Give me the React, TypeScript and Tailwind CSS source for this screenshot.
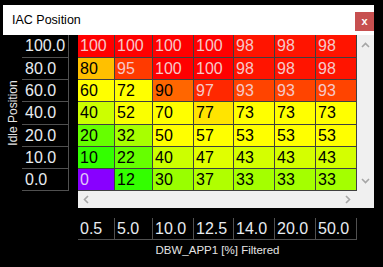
import React from 'react';

interface MapRow {
  label: string;
  values: number[];
}

const rows: MapRow[] = [
  { label: '100.0', values: [100, 100, 100, 100, 98, 98, 98] },
  { label: '80.0', values: [80, 95, 100, 100, 98, 98, 98] },
  { label: '60.0', values: [60, 72, 90, 97, 93, 93, 93] },
  { label: '40.0', values: [40, 52, 70, 77, 73, 73, 73] },
  { label: '20.0', values: [20, 32, 50, 57, 53, 53, 53] },
  { label: '10.0', values: [10, 22, 40, 47, 43, 43, 43] },
  { label: '0.0', values: [0, 12, 30, 37, 33, 33, 33] },
];

const cols = ['0.5', '5.0', '10.0', '12.5', '14.0', '20.0', '50.0'];
const colW = ['w-[37px]', 'w-[38px]', 'w-[41px]', 'w-[40px]', 'w-[41px]', 'w-[41px]', 'w-[41px]'];
const rowH = ['h-[23px]', 'h-[22px]', 'h-[22px]', 'h-[23px]', 'h-[22px]', 'h-[22px]', 'h-[22px]'];

// cell colour by value, light text on the hot / purple ones
const cellStyle: Record<number, string> = {
  100: 'bg-[#ff0000] text-[#f6c8c8]',
  98: 'bg-[#ff1400] text-[#f6c8c8]',
  97: 'bg-[#ff2800] text-[#f6c8c8]',
  95: 'bg-[#ff3a00] text-[#f6c8c8]',
  93: 'bg-[#ff4400] text-[#f6c8c8]',
  90: 'bg-[#ff6600] text-black',
  80: 'bg-[#ffc000] text-black',
  77: 'bg-[#ffe400] text-black',
  73: 'bg-[#ffff00] text-black',
  72: 'bg-[#ffff00] text-black',
  70: 'bg-[#ffff00] text-black',
  60: 'bg-[#ffff00] text-black',
  57: 'bg-[#ffff00] text-black',
  53: 'bg-[#ffff00] text-black',
  52: 'bg-[#faff00] text-black',
  50: 'bg-[#ffff00] text-black',
  47: 'bg-[#e0ff00] text-black',
  43: 'bg-[#d4ff00] text-black',
  40: 'bg-[#ccff00] text-black',
  37: 'bg-[#b0ff00] text-black',
  33: 'bg-[#a4ff00] text-black',
  32: 'bg-[#a8ff00] text-black',
  30: 'bg-[#99ff00] text-black',
  22: 'bg-[#66ff00] text-black',
  20: 'bg-[#66ff00] text-black',
  12: 'bg-[#33ff00] text-black',
  10: 'bg-[#33ff00] text-black',
  0: 'bg-[#8800ff] text-[#e0c8f8]',
};

const Chevron = ({ dir }: { dir: 'up' | 'down' | 'left' | 'right' }) => {
  const pts = {
    up: '1,6 4.5,2.5 8,6',
    down: '1,3 4.5,6.5 8,3',
    left: '6,1 2.5,4.5 6,8',
    right: '3,1 6.5,4.5 3,8',
  }[dir];
  return (
    <svg width="9" height="9" viewBox="0 0 9 9">
      <polyline points={pts} fill="none" stroke="#a6a6a6" strokeWidth="1.6" />
    </svg>
  );
};

export default function App() {
  return (
    <div className="w-[383px] h-[267px] bg-black pt-[5px] pl-[3px] overflow-hidden font-['Liberation_Sans',Arial,sans-serif]">
      <div className="w-[371px] h-[30px] bg-white flex justify-between">
        <span className="pl-[9px] text-[12.5px] leading-[30px] text-black">IAC Position</span>
        <div className="mt-[7px] w-[19px] h-[19px] bg-[#c75050] flex items-center justify-center text-white text-[11px] font-bold leading-none pb-[1px]">
          x
        </div>
      </div>

      <div className="flex">
        <div className="w-[19px] h-[156px] flex items-center justify-center">
          <span className="-rotate-90 whitespace-nowrap text-[12px] text-[#e4e4e4]">Idle Position</span>
        </div>
        <div className="w-[47px] h-[156px] border-r border-[#505050]">
          {rows.map((r, i) => (
            <div key={r.label} className={`${rowH[i]} border-b border-[#505050] pl-[3px] flex items-center text-[16px] text-[#e8ecf0]`}>
              {r.label}
            </div>
          ))}
        </div>
        <div className="ml-[9px]">
          <div className="flex">
            <div>
              {rows.map((r, i) => (
                <div key={r.label} className={`flex ${rowH[i]}`}>
                  {r.values.map((v, j) => (
                    <div
                      key={j}
                      className={`${colW[j]} ${cellStyle[v]} h-full border-r border-b border-[#404040] pl-[2px] flex items-center text-[16px]`}
                    >
                      {v}
                    </div>
                  ))}
                </div>
              ))}
            </div>
            <div className="w-[17px] bg-[#f0f0f0] flex flex-col items-center justify-between pt-[6px] pb-[6px]">
              <Chevron dir="up" />
              <Chevron dir="down" />
            </div>
          </div>
          <div className="w-[296px] h-[17px] bg-[#f0f0f0] flex items-center">
            <div className="w-[279px] flex items-center justify-between pl-[4px] pr-[5px]">
              <Chevron dir="left" />
              <Chevron dir="right" />
            </div>
          </div>
        </div>
      </div>

      <div className="pl-[75px] mt-[10px]">
        <div className="flex">
          {cols.map((c, j) => (
            <div key={c} className={`${colW[j]} h-[22px] border-r border-b border-[#505050] pl-[2px] flex items-center text-[16px] text-[#e8ecf0]`}>
              {c}
            </div>
          ))}
        </div>
        <div className="w-[279px] text-center text-[11.5px] leading-[14px] mt-[3px] text-[#e4e4e4]">
          DBW_APP1 [%] Filtered
        </div>
      </div>
    </div>
  );
}
